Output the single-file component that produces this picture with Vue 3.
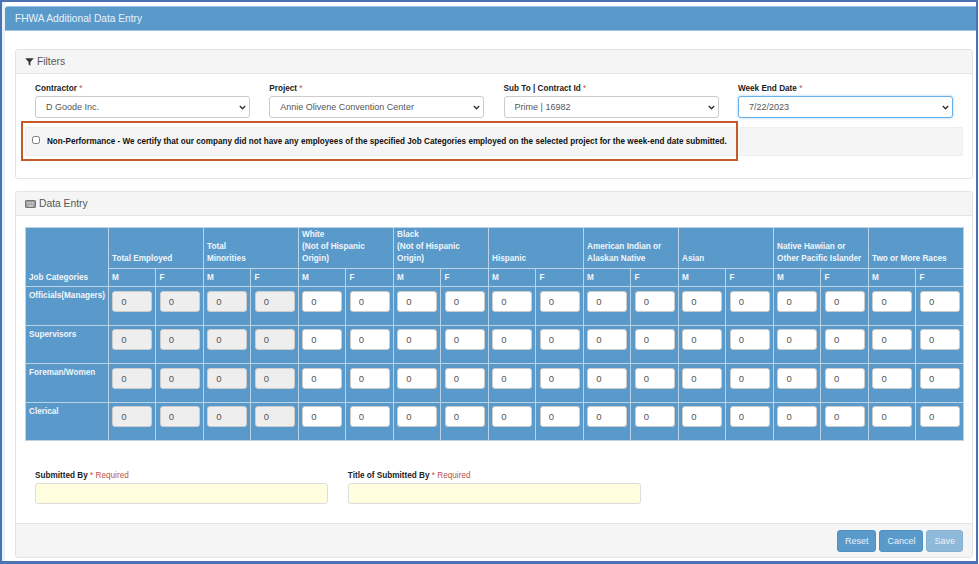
<script setup>
const filters = [
  { label: 'Contractor', value: 'D Goode Inc.' },
  { label: 'Project', value: 'Annie Olivene Convention Center' },
  { label: 'Sub To | Contract Id', value: 'Prime | 16982' },
  { label: 'Week End Date', value: '7/22/2023', focused: true },
]
const groups = [
  { lines: ['Total Employed'] },
  { lines: ['Total', 'Minorities'] },
  { lines: ['White', '(Not of Hispanic', 'Origin)'] },
  { lines: ['Black', '(Not of Hispanic', 'Origin)'] },
  { lines: ['Hispanic'] },
  { lines: ['American Indian or', 'Alaskan Native'] },
  { lines: ['Asian'] },
  { lines: ['Native Hawiian or', 'Other Pacific Islander'] },
  { lines: ['Two or More Races'] },
]
const rows = ['Officials(Managers)', 'Supervisors', 'Foreman/Women', 'Clerical']
const cols = Array.from({ length: 18 }, (_, i) => i)
</script>

<template>
  <div class="frame">
    <div class="page">
      <div class="title">FHWA Additional Data Entry</div>

      <section class="panel filters">
        <header class="panel-head">
          <svg class="ico" width="9" height="8" viewBox="0 0 10 9"><path d="M0.2 0.3h9.6L6 4.4v4.4L4 7.4V4.4z" fill="#333" /></svg>
          <span>Filters</span>
        </header>
        <div class="filter-grid">
          <div v-for="f in filters" :key="f.label" class="field">
            <label>{{ f.label }} <i>*</i></label>
            <select :class="{ focused: f.focused }"><option>{{ f.value }}</option></select>
          </div>
        </div>
        <div class="nonperf">
          <input type="checkbox" class="check" />
          <b>Non-Performance - We certify that our company did not have any employees of the specified Job Categories employed on the selected project for the week-end date submitted.</b>
          <div class="callout"></div>
        </div>
      </section>

      <section class="panel entry">
        <header class="panel-head">
          <svg class="ico" width="11" height="8" viewBox="0 0 11 8">
            <rect x="0.4" y="0.4" width="10.2" height="7.2" rx="1" fill="#9a9a9a" stroke="#555" stroke-width="0.8" />
            <path d="M2 2.5h7M2 4h7" stroke="#eee" stroke-width="0.8" stroke-dasharray="1 .6" />
            <path d="M3 6h5" stroke="#eee" stroke-width="0.9" />
          </svg>
          <span>Data Entry</span>
        </header>
        <div class="entry-body">
          <table class="grid">
            <colgroup>
              <col class="first" />
              <col v-for="c in cols" :key="c" class="pair" />
            </colgroup>
            <thead>
              <tr class="r1">
                <th rowspan="2" class="jobs">Job Categories</th>
                <th v-for="g in groups" :key="g.lines[0]" colspan="2" class="grp">
                  <div v-for="l in g.lines" :key="l">{{ l }}</div>
                </th>
              </tr>
              <tr class="r2">
                <th v-for="c in cols" :key="c">{{ c % 2 ? 'F' : 'M' }}</th>
              </tr>
            </thead>
            <tbody>
              <tr v-for="r in rows" :key="r" class="rw">
                <th class="rowname">{{ r }}</th>
                <td v-for="c in cols" :key="c">
                  <input class="num" value="0" :disabled="c < 4" />
                </td>
              </tr>
            </tbody>
          </table>

          <div class="submit">
            <div class="sfield">
              <label>Submitted By <i>* Required</i></label>
              <input class="req" />
            </div>
            <div class="sfield">
              <label>Title of Submitted By <i>* Required</i></label>
              <input class="req" />
            </div>
          </div>
        </div>
        <footer class="foot">
          <button>Reset</button>
          <button>Cancel</button>
          <button class="off">Save</button>
        </footer>
      </section>
    </div>
  </div>
</template>

<style scoped>
.frame {
  box-sizing: border-box;
  width: 978px;
  height: 564px;
  overflow: hidden;
  border: solid #4a72b4;
  border-width: 2px 2px 3px 2px;
  background: #fff;
  font-family: "Liberation Sans", Arial, sans-serif;
  font-size: 8.2px;
  color: #333;
}
.page {
  height: 100%;
  padding-top: 4px;
  box-sizing: border-box;
  border-left: 3px solid #e6f3fb;
}
.title {
  height: 25px;
  line-height: 24px;
  padding-left: 10px;
  box-sizing: border-box;
  background: #5a9acb;
  border-top: 1px solid #9cc4e2;
  border-bottom: 1px solid #9cc4e2;
  border-top-left-radius: 3px;
  color: #e8f2fa;
  font-size: 10.2px;
}
.panel {
  margin: 18px 3px 0 10px;
  border: 1px solid #e4e4e4;
  border-radius: 3px;
  box-sizing: border-box;
}
.panel-head {
  height: 24px;
  display: flex;
  align-items: center;
  gap: 3px;
  padding-left: 9px;
  box-sizing: border-box;
  background: #f5f5f5;
  border-bottom: 1px solid #e4e4e4;
  font-size: 10.3px;
  color: #555;
}
.filters { height: 130px; }
.entry { height: 367px; margin-top: 12px; display: flex; flex-direction: column; }
.filter-grid {
  display: grid;
  grid-template-columns: repeat(4, 215px);
  column-gap: 19.3px;
  padding: 8px 0 0 19px;
}
.field label, .sfield label {
  display: block;
  height: 14px;
  line-height: 13px;
  font-weight: bold;
  color: #222;
}
.field i, .sfield i { font-style: normal; font-weight: normal; color: #c0504d; }
select {
  display: block;
  width: 100%;
  height: 22px;
  padding: 0 16px 0 10px;
  box-sizing: border-box;
  appearance: none;
  background: #fff url("data:image/svg+xml,%3Csvg xmlns='http://www.w3.org/2000/svg' width='7' height='5' viewBox='0 0 7 5'%3E%3Cpath d='M.8 1l2.7 2.7L6.2 1' fill='none' stroke='%23333' stroke-width='1.4'/%3E%3C/svg%3E") no-repeat right 3px center;
  border: 1px solid #ccc;
  border-radius: 3px;
  font: 9px "Liberation Sans", Arial, sans-serif;
  color: #555;
}
select.focused { border-color: #66afe9; box-shadow: 0 0 3px rgba(102, 175, 233, .6); }
.nonperf {
  position: relative;
  display: flex;
  align-items: center;
  height: 29px;
  margin: 9px 9px 0;
  padding-left: 6px;
  background: #f5f5f5;
  border: 1px solid #eee;
  border-radius: 2px;
  box-sizing: border-box;
  color: #111;
}
.check { width: 8px; height: 8px; margin: 0 7px 4px 0; }
.nonperf b { white-space: nowrap; font-size: 8.15px; word-spacing: .07px; }
.callout {
  position: absolute;
  left: -5px;
  top: -7px;
  width: 716.5px;
  height: 40px;
  box-sizing: border-box;
  border: 2px solid #c55a28;
  pointer-events: none;
}
.entry-body { flex: 1; padding: 10.5px 9px 0; }
.grid {
  table-layout: fixed;
  width: 937.5px;
  border-collapse: collapse;
  background: #5a9acb;
  color: #f0f6fb;
}
col.first { width: 82.5px; }
col.pair { width: 47.5px; }
.grid th, .grid td { border: 1px solid #bcd3e6; font-weight: bold; text-align: left; padding: 0; font-size: 8.2px; }
.r1 { height: 41.5px; }
.r2 { height: 18.4px; }
.rw { height: 38.5px; }
.grp { vertical-align: bottom; padding: 0 2px 3px 3.5px !important; line-height: 12px; white-space: nowrap; }
.r2 th { padding-left: 3.5px !important; }
.jobs { vertical-align: bottom; padding: 0 3px 4px !important; }
.rowname { vertical-align: top; padding: 4px 3px 0 !important; white-space: nowrap; }
.grid td { vertical-align: top; padding: 3.5px 2.7px 0 3.8px; }
.num {
  display: block;
  box-sizing: border-box;
  width: 100%;
  height: 21px;
  padding: 0 8px;
  border: 1px solid #ccc;
  border-radius: 3px;
  background: #fff;
  font: 9.5px "Liberation Sans", Arial, sans-serif;
  color: #555;
  opacity: 1;
}
.num:disabled { background: #eee; color: #555; }
.submit { display: flex; gap: 19.5px; padding: 27.5px 0 0 10px; }
.sfield { width: 293.3px; }
.req {
  display: block;
  width: 100%;
  height: 21.5px;
  box-sizing: border-box;
  background: #ffffe0;
  border: 1px solid #ddd;
  border-radius: 3px;
}
.foot {
  height: 34px;
  box-sizing: border-box;
  display: flex;
  justify-content: flex-end;
  gap: 3px;
  padding: 6px 9px 0 0;
  background: #f5f5f5;
  border-top: 1px solid #e4e4e4;
}
.foot button {
  height: 22px;
  padding: 0 7px;
  border: 1px solid #4f8fc2;
  border-radius: 3px;
  background: #5a9acb;
  color: #e8f1f8;
  font: 9px "Liberation Sans", Arial, sans-serif;
}
.foot .off { opacity: .65; }
</style>
